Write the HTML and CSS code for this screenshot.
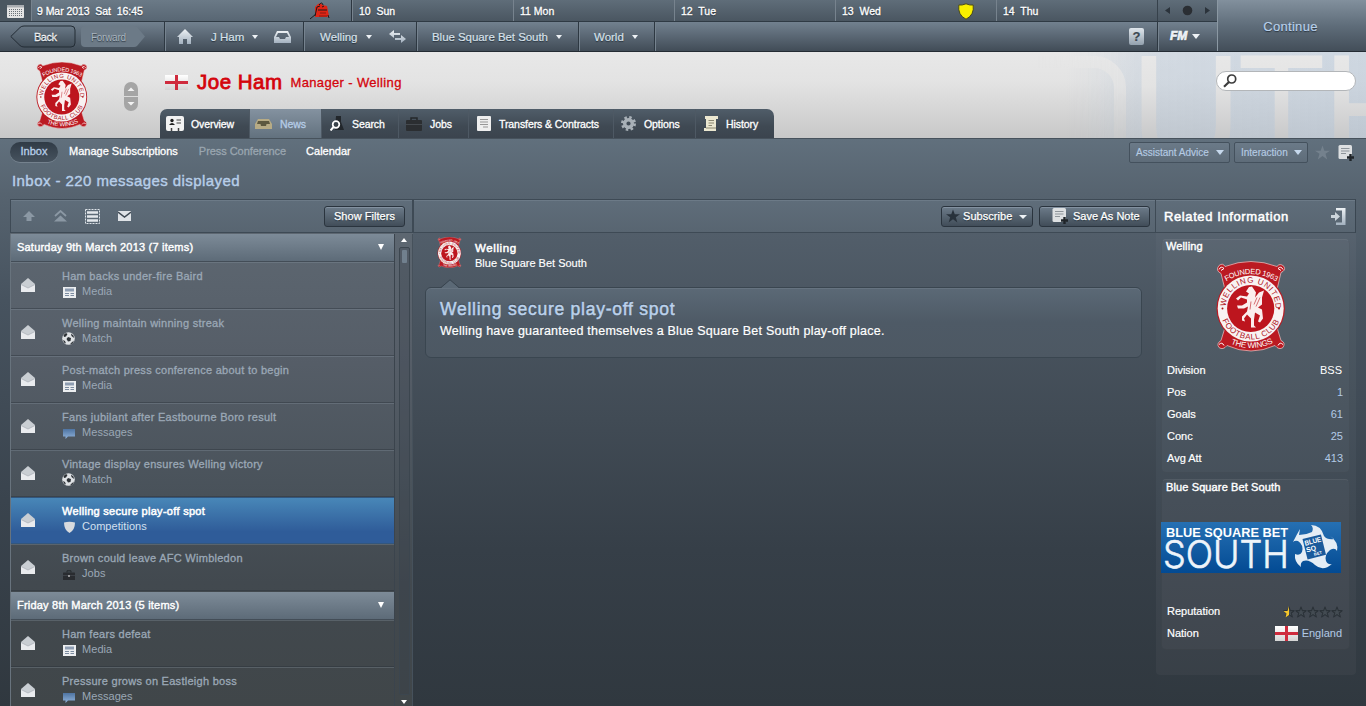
FILE: index.html
```html
<!DOCTYPE html>
<html lang="en">
<head>
    <meta charset="UTF-8">
    <meta name="viewport" content="width=device-width, initial-scale=1.0">
    <title>Joe Ham - Inbox</title>
    <link rel="stylesheet" href="styles.css">
</head>
<body>
    <!-- shared icons -->
    <svg class="defs" width="0" height="0">
        <defs>
            <linearGradient id="metal" x1="0" y1="0" x2="0" y2="1">
                <stop offset="0" stop-color="#eef2f5"/><stop offset="1" stop-color="#a3b1bf"/>
            </linearGradient>
            <linearGradient id="flag-shade" x1="0" y1="0" x2="0" y2="1">
                <stop offset="0" stop-color="#fff"/><stop offset="1" stop-color="#d4d4d4"/>
            </linearGradient>
            <linearGradient id="blue" x1="0" y1="0" x2="0" y2="1">
                <stop offset="0" stop-color="#2670b3"/><stop offset="1" stop-color="#024a93"/>
            </linearGradient>
            <linearGradient id="chat" x1="0" y1="0" x2="0" y2="1">
                <stop offset="0" stop-color="#4e74a2"/><stop offset="1" stop-color="#92b4dc"/>
            </linearGradient>
            <linearGradient id="back-fill" x1="0" y1="0" x2="0" y2="1">
                <stop offset="0" stop-color="#6b7a88"/><stop offset="1" stop-color="#414d58"/>
            </linearGradient>
            <linearGradient id="letters" gradientUnits="userSpaceOnUse" x1="0" y1="52" x2="0" y2="138">
                <stop offset="0" stop-color="#e8e8e8"/><stop offset=".4" stop-color="#e3e3e3"/><stop offset="1" stop-color="#c8c9ca"/>
            </linearGradient>
            <linearGradient id="tint" x1="0" y1="0" x2="1" y2="0">
                <stop offset="0" stop-color="#b4c6da" stop-opacity="0"/><stop offset=".3" stop-color="#b4c6da" stop-opacity=".4"/><stop offset="1" stop-color="#b4c6da" stop-opacity=".5"/>
            </linearGradient>
            <path id="arc-founded" d="M8 21Q35 4 62 21"/>
            <path id="arc-name" d="M10.300 52A25 25 0 1 1 59 52"/>
            <path id="arc-club" d="M4 47A31 31 0 0 0 66 47"/>
            <path id="arc-wings" d="M10 80Q35 93 60 80"/>
        </defs>
        <symbol id="crest" viewBox="0 0 70 90">
            <path d="M3 4Q7 1 9 5Q35-5 61 5Q64 1 68 5Q70 9 65 11L61 28H9L5 12Q-1 9 3 4Z" fill="#bb1a22" stroke="#ecc9c9" stroke-width=".7"/>
            <path d="M9 66H61L65 79Q70 81 67 86Q63 89 59 84Q35 95 11 84Q7 89 3 86Q0 82 5 79Z" fill="#bb1a22" stroke="#ecc9c9" stroke-width=".7"/>
            <path d="M3 8Q5 4 8 7L5 9M67 8Q65 4 62 7L65 9M3 83Q6 80 8 84M67 83Q64 80 62 84" fill="none" stroke="#fff" stroke-width="1"/>
            <circle cx="34.700" cy="47" r="34.200" fill="#bb1a22"/>
            <circle cx="34.700" cy="47" r="33" fill="#f8f2f2"/>
            <circle cx="34.700" cy="47" r="23.600" fill="#bd151e"/>
            <circle cx="6.500" cy="47" r="1" fill="#a11"/>
            <circle cx="63" cy="47" r="1" fill="#a11"/>
            <path d="M30 30L33 25.500L36 25L40 31L39 36L43 31L48 29L46 36L46 43L42 46L46 48L47 57L44 61L42 60L44 54L39 51L38 58L38 64L40 66H35L35 57L31 53L28 57L29 60L26 59L26 55L31 50L32 45L28 47L22 47L21 44L26 44L31 41L31 38L25 36L22 39L20 37L24 34L31 35L33 32Z" fill="#fbeeee"/>
            <path d="M41 36L38 43M44 36L40 45M35 40L34 48" stroke="#bd151e" stroke-width=".6"/>
            <g font-family="Liberation Sans, sans-serif" font-size="8">
                <text fill="#fff" font-size="7.500"><textPath href="#arc-founded" startOffset="2.500" textLength="53">FOUNDED 1963</textPath></text>
                <text fill="#b0151e"><textPath href="#arc-name" startOffset="7" textLength="78">WELLING UNITED</textPath></text>
                <text fill="#b0151e"><textPath href="#arc-club" startOffset="12" textLength="72">FOOTBALL CLUB</textPath></text>
                <text fill="#fff"><textPath href="#arc-wings" startOffset="5" textLength="44">THE WINGS</textPath></text>
            </g>
        </symbol>
        <symbol id="england" viewBox="0 0 23 15">
            <rect width="23" height="15" fill="url(#flag-shade)"/>
            <path d="M0 7.500H23M11.500 0V15" stroke="#cf2b3d" stroke-width="3"/>
        </symbol>
        <symbol id="mail-open" viewBox="0 0 14 14">
            <path d="M0 6L7 0L14 6V13.500H0Z" fill="#c9ced3"/>
            <path d="M0 6.500L7 10L14 6.500V14H0Z" fill="#e9ebee"/>
            <path d="M0 6.500L7 10L14 6.500" fill="none" stroke="#a9afb6" stroke-width=".7"/>
        </symbol>
        <symbol id="media" viewBox="0 0 13 11">
            <rect width="13" height="11" fill="#eceef0"/>
            <rect x="2" y="1.500" width="9" height="3" fill="#8e9db2"/>
            <path d="M2 6.500H6M7.500 6.500H11M2 8.500H6M7.500 8.500H11" stroke="#7b8ba0"/>
        </symbol>
        <symbol id="match" viewBox="0 0 13 13">
            <circle cx="6.500" cy="6.500" r="6.300" fill="#dfe2e5"/>
            <path d="M1.500 3L4 1L5.500 2L4 4.500L2 5ZM6 5L9 6L8.500 9L6 9.500L4.500 7ZM9 1.500L11.500 3.500L12 6L9.500 4ZM1 8L3 9L4 11.500L2 10.500ZM9 11L12 8.500L10.500 11.500L8 12.500Z" fill="#2c3136"/>
        </symbol>
        <symbol id="messages" viewBox="0 0 12 10">
            <path d="M0 0H12V7.500H5L2.500 10V7.500H0Z" fill="url(#chat)"/>
        </symbol>
        <symbol id="competitions" viewBox="0 0 11 12">
            <path d="M0 1.500Q5.500 0 11 1.500Q11 9 5.500 12Q0 9 0 1.500Z" fill="#d8dbde"/>
        </symbol>
        <symbol id="briefcase" viewBox="0 0 12 10">
            <path d="M4 2.500V.8H8V2.500" fill="none" stroke="#24282c"/>
            <rect y="2.500" width="12" height="7.500" rx=".6" fill="#292c30"/>
            <path d="M0 5.500H12" stroke="#4b5158" stroke-width=".6"/>
            <rect x="5.400" y="5" width="1.200" height="2" fill="#d6d6d6"/>
        </symbol>
        <symbol id="note-add" viewBox="0 0 16 16">
            <rect x=".5" width="13.500" height="14" rx="1.500" fill="#dde0e2"/>
            <path d="M3 3.500H11.500M3 6H11.500M3 8.500H8" stroke="#8d949a"/>
            <path d="M12.500 9V16M9 12.500H16" stroke="#1f2429" stroke-width="2.400"/>
        </symbol>
        <symbol id="star" viewBox="0 0 16 16">
            <path d="M8 .5L10 6H16L11.200 9.400L13 15.500L8 11.800L3 15.500L4.800 9.400L0 6H6Z"/>
        </symbol>
    </svg>

    <header class="top">
        <div class="top-left">
            <div class="days">
                <div class="cal">
                    <svg width="17" height="13" viewBox="0 0 17 13">
                        <rect width="17" height="13" rx="1" fill="#e4e4e4"/>
                        <rect width="17" height="2.500" fill="#a9adb1"/>
                        <path d="M2 4.500H15M2 6.500H15M2 8.500H15M2 10.500H15" stroke="#6a7178" stroke-dasharray="1 1"/>
                    </svg>
                </div>
                <div class="day today">
                    <span>9 Mar 2013&nbsp; Sat&nbsp; 16:45</span>
                    <svg class="dragon" width="20" height="18" viewBox="0 0 20 18">
                        <path d="M5 5L8 2L11 1L12 3L17 4L19 14L17 15H5Z" fill="#df2415"/>
                        <path d="M0 17L6 12M5 14L7 5L10 4M9 3Q12-1 13 3M8 8H17M18 13L19 16M12 5L14 4" fill="none" stroke="#1b1a1c" stroke-width="1"/>
                        <path d="M9 14H17M10 11H16" stroke="#881812"/>
                    </svg>
                </div>
                <div class="day">10&nbsp; Sun</div>
                <div class="day">11 Mon</div>
                <div class="day">12&nbsp; Tue</div>
                <div class="day">
                    13&nbsp; Wed
                    <svg class="shield" width="16" height="17" viewBox="0 0 16 17">
                        <path d="M.8 2Q4 2.500 8 .8Q12 2.500 15.200 2Q16.500 12 8 16.200Q-.5 12 .8 2Z" fill="#f9f000" stroke="#4a4a1c"/>
                    </svg>
                </div>
                <div class="day">14&nbsp; Thu</div>
                <div class="pager">
                    <svg width="48" height="12" viewBox="0 0 48 12">
                        <path d="M6 2V9L1 5.500ZM41 2V9L46 5.500Z" fill="#2b333b"/>
                        <circle cx="23.500" cy="5.500" r="4.800" fill="#2a2e33"/>
                    </svg>
                </div>
            </div>
            <nav class="crumbs">
                <div class="history">
                    <svg width="66" height="23" viewBox="0 0 66 23">
                        <path d="M.8 11.500L10 2.500Q11.500 1 14 1H61Q65 1 65 5V18Q65 22 61 22H14Q11.500 22 10 20.500Z" fill="url(#back-fill)" stroke="#232c35"/>
                        <text x="24" y="16" class="back-text" textLength="23">Back</text>
                    </svg>
                    <svg width="64" height="21" viewBox="0 0 64 21">
                        <path d="M4 0H53Q55 0 56 1L64 10.500L56 20Q55 21 53 21H4Q0 21 0 17V4Q0 0 4 0Z" fill="#6c7a87"/>
                        <text x="10" y="14.500" class="forward-text" textLength="35">Forward</text>
                    </svg>
                </div>
                <div class="crumb user">
                    <svg width="16" height="15" viewBox="0 0 16 15"><path d="M8 0L16 8H14V15H10V10H6V15H2V8H0Z" fill="url(#metal)"/></svg>
                    <span>J Ham</span><i class="caret"></i>
                    <svg width="17" height="12" viewBox="0 0 17 12"><path d="M3 0H14L17 6V12H0V6ZM4 2L2 6H5L6 8H11L12 6H15L13 2Z" fill="url(#metal)" fill-rule="evenodd"/></svg>
                </div>
                <div class="crumb club">
                    <span>Welling</span><i class="caret"></i>
                    <svg width="17" height="13" viewBox="0 0 17 13"><path d="M5 0V3H11V5H5V8L0 4ZM12 5V8H6V10H12V13L17 9Z" fill="url(#metal)"/></svg>
                </div>
                <div class="crumb comp"><span>Blue Square Bet South</span><i class="caret"></i></div>
                <div class="crumb world"><span>World</span><i class="caret"></i></div>
                <div class="crumb rest"><b class="help">?</b></div>
                <div class="crumb fm"><span>FM</span><i class="caret"></i></div>
            </nav>
        </div>
        <div class="continue">Continue</div>
    </header>

    <section class="title-bar">
        <svg class="watermark" width="330" height="86" viewBox="1036 52 330 86">
            <rect x="1066" y="52" width="300" height="86" fill="url(#tint)"/>
            <rect x="960" y="62" width="160" height="140" rx="26" fill="none" stroke="url(#letters)" stroke-width="12" opacity=".85"/>
            <g font-family="Liberation Sans, sans-serif" font-size="163" fill="url(#letters)">
                <text x="1129.500" y="168" textLength="113" lengthAdjust="spacingAndGlyphs">U</text>
                <text x="1237.500" y="168" textLength="88" lengthAdjust="spacingAndGlyphs">T</text>
                <text x="1321.500" y="168" textLength="113" lengthAdjust="spacingAndGlyphs">H</text>
            </g>
        </svg>
        <svg class="crest-main" width="52" height="67"><use href="#crest"/></svg>
        <svg class="stepper" width="14" height="29" viewBox="0 0 14 29">
            <path d="M0 14V7A7 7 0 0 1 14 7V14ZM0 15H14V22A7 7 0 0 1 0 22Z" fill="#a5a5a5"/>
            <path d="M3.500 9H10.500L7 5.500ZM3.500 20H10.500L7 23.500Z" fill="#f2f2f2"/>
        </svg>
        <div class="title-main">
            <div class="who">
                <svg width="23" height="15"><use href="#england"/></svg>
                <h1>Joe Ham</h1>
                <span>Manager - Welling</span>
            </div>
            <ul class="tabs">
                <li class="t1"><svg width="18" height="15" viewBox="0 0 18 15"><rect width="18" height="15" rx="2" fill="#f2f2f2"/><circle cx="6" cy="4.500" r="1.700" fill="#222"/><path d="M3 9Q6 5 9 9Z" fill="#222"/><path d="M10.500 4H15M10.500 7H15" stroke="#444"/><path d="M5.500 12V15M12.500 12V15" stroke="#444" stroke-width="1.500"/></svg>Overview</li>
                <li class="t2 on"><svg width="17" height="10" viewBox="0 0 17 10"><path d="M3 0H14L17 5V10H0V5Z" fill="#b7ab85"/><path d="M3 2H14L15 5H11.500L11 7H6L5.500 5H2Z" fill="#5d583f"/></svg>News</li>
                <li class="t3"><svg width="14" height="15" viewBox="0 0 14 15"><path d="M6 0H11V6L14 14H5Z" fill="#22272c"/><circle cx="6" cy="8.500" r="3.300" fill="#39424a" stroke="#fff" stroke-width="1.700"/><path d="M3.500 11L.5 14.500" stroke="#fff" stroke-width="2"/></svg>Search</li>
                <li class="t4"><svg width="16" height="14" viewBox="0 0 16 14"><path d="M5 3V1H11V3" fill="none" stroke="#25282b" stroke-width="1.500"/><rect y="3" width="16" height="11" rx="1" fill="#2b2e31"/><path d="M0 7.500H16" stroke="#44494e"/></svg>Jobs</li>
                <li class="t5"><svg width="14" height="15" viewBox="0 0 14 15"><rect width="14" height="15" rx="1" fill="#eee"/><path d="M3 3.500H11M3 6H11M3 8.500H11M6 11H11" stroke="#979797"/></svg>Transfers &amp; Contracts</li>
                <li class="t6"><svg width="15" height="15" viewBox="0 0 15 15"><circle cx="7.500" cy="7.500" r="6" fill="none" stroke="#a8b0b7" stroke-width="3" stroke-dasharray="2.400 2.312"/><circle cx="7.500" cy="7.500" r="3.800" fill="none" stroke="#a8b0b7" stroke-width="3.400"/></svg>Options</li>
                <li class="t7"><svg width="14" height="15" viewBox="0 0 14 15"><path d="M1 0H14V3H12V15H0V12H2V3H1Z" fill="#ebe7d0"/><path d="M4.500 4.500H10M4.500 7H10M4.500 9.500H8M2 12H12" stroke="#8a8671"/></svg>History</li>
            </ul>
        </div>
        <div class="search">
            <svg width="14" height="14" viewBox="0 0 14 14"><circle cx="8.700" cy="5" r="4" fill="none" stroke="#3c3c3c" stroke-width="1.700"/><path d="M6 8L1 12.800" stroke="#3c3c3c" stroke-width="2.200"/></svg>
        </div>
    </section>

    <nav class="sub-nav">
        <ul>
            <li class="pill">Inbox</li>
            <li>Manage Subscriptions</li>
            <li class="off">Press Conference</li>
            <li>Calendar</li>
        </ul>
        <div class="actions">
            <span class="drop advice">Assistant Advice<i class="caret"></i></span>
            <span class="drop interaction">Interaction<i class="caret"></i></span>
            <svg class="fav" width="15" height="15"><use href="#star"/></svg>
            <svg width="16" height="16"><use href="#note-add"/></svg>
        </div>
    </nav>
    <h2 class="count">Inbox - 220 messages displayed</h2>

    <main>
        <section class="inbox">
            <div class="tools">
                <svg width="12" height="10" viewBox="0 0 12 10"><path d="M6 0L12 6H8.500V10H3.500V6H0Z" fill="#8b98a4"/></svg>
                <svg width="13" height="12" viewBox="0 0 13 12"><path d="M1 6L6.500 1L12 6" fill="none" stroke="#8b98a4" stroke-width="1.800"/><path d="M6.500 5.500L13 11.500H0Z" fill="#8b98a4"/></svg>
                <svg width="15" height="15" viewBox="0 0 15 15"><rect x=".5" y=".5" width="14" height="14" fill="none" stroke="#dfe5ea" stroke-dasharray="2 1"/><path d="M2 3.500H13M2 7.500H13M2 11.500H13" stroke="#e4e8ec" stroke-width="2.500"/></svg>
                <svg width="13" height="10" viewBox="0 0 13 10"><rect width="13" height="10" fill="#dfe3e7"/><path d="M0 1L6.500 6L13 1" fill="none" stroke="#3e4953" stroke-width="1.400"/></svg>
                <span class="btn filters">Show Filters</span>
            </div>
            <div class="list-wrap">
                <div class="list">
                    <div class="group">Saturday 9th March 2013 (7 items)<i></i></div>
                    <div class="item"><svg class="env"><use href="#mail-open"/></svg><div><h3>Ham backs under-fire Baird</h3><p><svg class="kind media"><use href="#media"/></svg>Media</p></div></div>
                    <div class="item"><svg class="env"><use href="#mail-open"/></svg><div><h3>Welling maintain winning streak</h3><p><svg class="kind"><use href="#match"/></svg>Match</p></div></div>
                    <div class="item"><svg class="env"><use href="#mail-open"/></svg><div><h3>Post-match press conference about to begin</h3><p><svg class="kind media"><use href="#media"/></svg>Media</p></div></div>
                    <div class="item"><svg class="env"><use href="#mail-open"/></svg><div><h3>Fans jubilant after Eastbourne Boro result</h3><p><svg class="kind small"><use href="#messages"/></svg>Messages</p></div></div>
                    <div class="item"><svg class="env"><use href="#mail-open"/></svg><div><h3>Vintage display ensures Welling victory</h3><p><svg class="kind"><use href="#match"/></svg>Match</p></div></div>
                    <div class="item selected"><svg class="env"><use href="#mail-open"/></svg><div><h3>Welling secure play-off spot</h3><p><svg class="kind shield-icon"><use href="#competitions"/></svg>Competitions</p></div></div>
                    <div class="item"><svg class="env"><use href="#mail-open"/></svg><div><h3>Brown could leave AFC Wimbledon</h3><p><svg class="kind small"><use href="#briefcase"/></svg>Jobs</p></div></div>
                    <div class="group second">Friday 8th March 2013 (5 items)<i></i></div>
                    <div class="item"><svg class="env"><use href="#mail-open"/></svg><div><h3>Ham fears defeat</h3><p><svg class="kind media"><use href="#media"/></svg>Media</p></div></div>
                    <div class="item"><svg class="env"><use href="#mail-open"/></svg><div><h3>Pressure grows on Eastleigh boss</h3><p><svg class="kind small"><use href="#messages"/></svg>Messages</p></div></div>
                </div>
                <div class="scroll">
                    <i class="up"></i>
                    <div class="track"><div class="thumb"></div></div>
                    <i class="down"></i>
                </div>
            </div>
        </section>

        <section class="message">
            <div class="tools">
                <span class="btn subscribe"><svg width="14" height="14"><use href="#star"/></svg>Subscribe<i class="caret"></i></span>
                <span class="btn save"><svg width="16" height="16"><use href="#note-add"/></svg>Save As Note</span>
            </div>
            <div class="from">
                <svg width="25" height="31"><use href="#crest"/></svg>
                <div>
                    <b>Welling</b>
                    <span>Blue Square Bet South</span>
                </div>
            </div>
            <article class="bubble">
                <svg class="tip" width="18" height="9" viewBox="0 0 18 9"><path d="M0 9L9 .8L18 9Z" fill="#5b6976"/><path d="M0 8.500L9 .8L18 8.500" fill="none" stroke="#38444e"/></svg>
                <h2>Welling secure play-off spot</h2>
                <p>Welling have guaranteed themselves a Blue Square Bet South play-off place.</p>
            </article>
        </section>

        <aside class="related">
            <div class="tools">
                <h2>Related Information</h2>
                <svg width="15" height="17" viewBox="0 0 15 17"><path d="M5 0H14.500V17H5V14.500H11V2.500H5Z" fill="url(#metal)"/><path d="M0 7H4V4L9 8.500L4 13V10H0Z" fill="#cdd5dc"/></svg>
            </div>
            <div class="card club-card">
                <h3>Welling</h3>
                <svg class="crest-big" width="70" height="91"><use href="#crest"/></svg>
                <dl>
                    <dt>Division</dt><dd class="white">BSS</dd>
                    <dt>Pos</dt><dd>1</dd>
                    <dt>Goals</dt><dd>61</dd>
                    <dt>Conc</dt><dd>25</dd>
                    <dt>Avg Att</dt><dd>413</dd>
                </dl>
            </div>
            <div class="card comp-card">
                <h3>Blue Square Bet South</h3>
                <svg class="banner" width="180" height="51" viewBox="0 0 180 51">
                    <rect width="180" height="51" fill="url(#blue)"/>
                    <text x="5" y="15" class="banner-top" textLength="122" lengthAdjust="spacingAndGlyphs">BLUE SQUARE BET</text>
                    <text x="2" y="46" class="banner-main" textLength="126" lengthAdjust="spacingAndGlyphs">SOUTH</text>
                    <path d="M132 20Q136 12 139 7L138 13Q145 13 151 10Q153 6 150 3Q160 3 163 14Q166 18 173 17L169 14Q178 20 176 29Q174 25 169 28Q163 33 165 39Q167 43 171 42Q162 50 154 43Q148 37 142 39Q139 41 140 45Q133 40 134 32Q139 34 141 30Q143 23 137 19Q134 18 132 20Z" fill="#e4edf5"/>
                    <g class="banner-logo" transform="rotate(-14 153 24)">
                        <rect x="143.500" y="14.500" width="19" height="21" fill="#1a5a9b"/>
                        <text x="144.500" y="21.500" textLength="17" lengthAdjust="spacingAndGlyphs">BLUE</text>
                        <text x="144.500" y="28.500">SQ</text>
                        <text x="151" y="33.500" class="tiny">BET</text>
                    </g>
                </svg>
                <dl>
                    <dt>Reputation</dt>
                    <dd class="stars">
                        <svg width="60" height="12" viewBox="0 0 60 12">
                            <g fill="#434b52" stroke="#2b3238" stroke-width="1.500">
                                <use href="#star" x=".5" y=".5" width="11" height="11"/>
                                <use href="#star" x="12.500" y=".5" width="11" height="11"/>
                                <use href="#star" x="24.500" y=".5" width="11" height="11"/>
                                <use href="#star" x="36.500" y=".5" width="11" height="11"/>
                                <use href="#star" x="48.500" y=".5" width="11" height="11"/>
                            </g>
                            <path d="M6 0V9L2.500 11.500L3.500 7.500L.5 5H4.500Z" fill="#f5c62c"/>
                        </svg>
                    </dd>
                    <dt>Nation</dt>
                    <dd class="nation"><svg width="23" height="15"><use href="#england"/></svg>England</dd>
                </dl>
            </div>
        </aside>
    </main>
</body>
</html>
```

FILE: styles.css
```css
* {
    box-sizing: border-box;
}
body {
    margin: 0;
    height: 706px;
    overflow: hidden;
    font-family: "Liberation Sans", Arial, sans-serif;
    font-size: 11px;
    color: #fff;
    background: linear-gradient(#61707d 138px, #56636f 195px, #47535f 300px, #3a444e 500px, #30383f 706px);
}
h1, h2, h3, p, ul, dl, dd {
    margin: 0;
    padding: 0;
    font-weight: normal;
}
ul {
    list-style: none;
}
svg {
    display: block;
    flex: none;
}
.defs {
    position: absolute;
}
.caret {
    width: 0;
    height: 0;
    border: 3.5px solid transparent;
    border-top: 4px solid #eef2f6;
    border-bottom: 0;
}

/* top bar */
.top {
    display: grid;
    grid-template-columns: 1217px 149px;
    height: 52px;
    border-bottom: 1px solid #242c34;
    text-shadow: 0 1px 1px rgba(20, 30, 40, 0.7);
}
.days {
    display: flex;
    height: 22px;
    background: linear-gradient(#5f6d79, #4a5661);
    border-bottom: 1px solid #2f3a44;
}
.cal {
    width: 31px;
    padding: 5px 0 0 7px;
    background: #4a5660;
}
.day {
    position: relative;
    width: 161px;
    padding: 5px 0 0 6px;
    line-height: 13px;
    border-left: 1px solid #77838e;
    font-size: 10.5px;
    -webkit-text-stroke: 0.3px #fff;
}
.day.today {
    width: 321px;
    padding-left: 5px;
    background: linear-gradient(#6b7a87, #586673);
    letter-spacing: -0.05px;
    border-right: 1px solid #2c3640;
}
.dragon {
    position: absolute;
    right: 21px;
    top: 2px;
}
.shield {
    position: absolute;
    right: 22px;
    top: 3px;
}
.pager {
    flex: 1;
    padding: 5px 0 0 6px;
    border-left: 1px solid #36414b;
}
.crumbs {
    display: flex;
    height: 29px;
    background: linear-gradient(#72818f, #5c6976 45%, #414c57);
    font-size: 11.5px;
    color: #d7e1ea;
}
.history {
    display: flex;
    align-items: center;
    gap: 5px;
    width: 164px;
    padding-left: 10px;
}
.back-text {
    font-size: 11px;
    fill: #fff;
    stroke: #fff;
    stroke-width: 0.3px;
}
.forward-text {
    font-size: 10px;
    fill: #aab5bf;
}
.crumb {
    display: flex;
    align-items: center;
    border-left: 1px solid #2d3842;
    box-shadow: inset 1px 0 0 #76838f;
    -webkit-text-stroke: 0.2px;
}
.crumb span {
    margin-right: 8px;
}
.user {
    width: 139px;
    padding-left: 12px;
}
.user span {
    margin-left: 18px;
}
.user svg:last-child {
    margin-left: 16px;
}
.club {
    width: 113px;
    padding-left: 16px;
}
.club svg {
    margin-left: 17px;
}
.comp {
    width: 162px;
    padding-left: 15px;
    letter-spacing: -0.05px;
}
.world {
    width: 76px;
    padding-left: 15px;
}
.rest {
    flex: 1;
    justify-content: flex-end;
    padding-right: 13px;
}
.help {
    width: 15px;
    height: 17px;
    line-height: 17px;
    text-align: center;
    font-size: 13px;
    color: #3d4852;
    background: linear-gradient(#e0e6ec, #92a0ad);
    border-radius: 2px;
    text-shadow: none;
}
.fm {
    width: 60px;
    padding: 0 0 1px 12px;
}
.fm span {
    font-size: 12px;
    font-style: italic;
    font-weight: bold;
    color: #eef2f6;
    margin-right: 5px;
    -webkit-text-stroke: 0.7px;
}
.fm .caret {
    border-width: 5px 4px 0;
}
.continue {
    display: flex;
    align-items: center;
    justify-content: center;
    font-size: 13px;
    letter-spacing: 0.3px;
    color: #b9d0ea;
    -webkit-text-stroke: 0.2px;
    background: linear-gradient(#82909d, #5f6d7a 50%, #434e59);
    border-left: 1px solid #8b98a3;
    padding: 2px 3px 0 0;
}

/* title bar */
.title-bar {
    position: relative;
    display: flex;
    height: 86px;
    background: linear-gradient(#e8e8e8, #e3e3e3 35%, #c8c8c8);
}
.watermark {
    position: absolute;
    right: 0;
    top: 0;
    -webkit-mask-image: linear-gradient(to right, transparent, #000 25%);
    mask-image: linear-gradient(to right, transparent, #000 25%);
}
.crest-main {
    margin: 10px 0 0 36px;
}
.stepper {
    margin: 30px 0 0 36px;
}
.title-main {
    margin-left: 22px;
}
.who {
    display: flex;
    align-items: center;
    height: 57px;
    padding: 3px 0 0 5px;
    color: #d4040c;
}
.who h1 {
    margin: 0 8px 0 9px;
    font-size: 20.5px;
    letter-spacing: 0.5px;
    -webkit-text-stroke: 0.8px;
}
.who span {
    font-size: 13px;
    letter-spacing: 0.35px;
    padding-top: 1px;
    -webkit-text-stroke: 0.3px;
}
.tabs {
    display: flex;
    height: 29px;
    border-radius: 7px 7px 0 0;
    overflow: hidden;
    background: linear-gradient(#505d69, #3f4953 60%, #3b444e);
}
.tabs li {
    display: flex;
    align-items: center;
    border-left: 1px solid #4e5964;
    padding-left: 6px;
    font-size: 10.5px;
    letter-spacing: -0.08px;
    -webkit-text-stroke: 0.3px;
}
.tabs li svg {
    margin-right: 7px;
}
.tabs .t1 { width: 89px; border-left: 0; }
.tabs .t2 { width: 72px; padding-left: 5px; }
.tabs .t3 { width: 77px; padding-left: 8px; }
.tabs .t4 { width: 70px; padding-left: 7px; }
.tabs .t5 { width: 145px; padding-left: 8px; }
.tabs .t6 { width: 82px; padding-left: 7px; }
.tabs .t7 { width: 79px; padding-left: 8px; }
.tabs .t2 svg, .tabs .t3 svg, .tabs .t4 svg, .tabs .t5 svg, .tabs .t6 svg, .tabs .t7 svg {
    margin-right: 8px;
}
.tabs .on {
    background: linear-gradient(#8492a0, #62717e);
    color: #b5cce6;
}
.search {
    position: absolute;
    left: 1216px;
    top: 19px;
    width: 140px;
    height: 20px;
    padding: 2px 0 0 6px;
    background: #fff;
    border: 1px solid #b3b6b9;
    border-radius: 10px;
}

/* sub navigation */
.sub-nav {
    display: flex;
    justify-content: space-between;
    height: 31px;
    border-top: 1px solid #47525c;
    padding: 3px 12px 0 10px;
}
.sub-nav ul {
    display: flex;
    line-height: 19px;
    -webkit-text-stroke: 0.3px;
}
.sub-nav li {
    margin-right: 21px;
}
.sub-nav .pill {
    width: 48px;
    height: 20px;
    margin-right: 11px;
    text-align: center;
    border-radius: 10px;
    color: #b9d0ea;
    background: linear-gradient(#303b46, #46525e);
    box-shadow: 0 1px 0 #75828e;
}
.sub-nav .off {
    margin-right: 20px;
    color: #9aa6b0;
    letter-spacing: -0.05px;
}
.actions {
    display: flex;
}
.drop {
    display: flex;
    align-items: center;
    justify-content: space-between;
    height: 21px;
    padding: 0 5px 0 6px;
    font-size: 10px;
    color: #b5cbe3;
    white-space: nowrap;
    background: linear-gradient(#6b7a88, #5e6c79);
    border: 1px solid #44515d;
    border-radius: 2px;
    -webkit-text-stroke: 0.15px;
}
.advice {
    width: 101px;
    margin-right: 4px;
}
.interaction {
    width: 74px;
}
.drop .caret {
    border-width: 5px 4px 0;
    border-top-color: #c6d8ec;
}
.fav {
    margin: 3px 8px 0 7px;
    fill: #74818d;
}
.fav + svg {
    margin-top: 3px;
}
.count {
    height: 30px;
    padding: 3px 0 0 12px;
    font-size: 15px;
    letter-spacing: 0.43px;
    line-height: 18px;
    color: #b7cee9;
    -webkit-text-stroke: 0.4px;
}

/* panels */
main {
    display: flex;
    height: 507px;
    padding-left: 10px;
}
.tools {
    display: flex;
    align-items: center;
    height: 34px;
    background: linear-gradient(#5f6d7a, #586571);
    border: 1px solid #3e4a55;
    box-shadow: inset 0 1px 0 #6c7a87;
}
.btn {
    display: flex;
    align-items: center;
    height: 21px;
    border: 1px solid #2a343e;
    border-radius: 3px;
    background: linear-gradient(#6c7b89, #414d59);
    box-shadow: inset 0 1px 0 #8391a0;
    text-shadow: 0 1px 1px rgba(20, 30, 40, 0.7);
    -webkit-text-stroke: 0.25px;
}
.inbox {
    width: 403px;
}
.inbox .tools {
    padding-left: 12px;
}
.inbox .tools svg {
    margin-right: 18px;
}
.inbox .tools svg:first-child {
    margin-right: 19px;
}
.filters {
    width: 81px;
    margin-left: auto;
    margin-right: 7px;
    justify-content: center;
    letter-spacing: 0.05px;
}
.list-wrap {
    display: flex;
    height: 473px;
    padding-top: 1px;
    background: linear-gradient(#5d6771, #565e68 120px, #49525a 260px, #42494f 350px, #404649);
}
.list {
    width: 384px;
    border-left: 1px solid #68737d;
}
.group {
    display: flex;
    align-items: center;
    justify-content: space-between;
    height: 28px;
    padding: 0 10px 1px 6px;
    background: linear-gradient(#7d8b98, #5d6b78);
    border-bottom: 1px solid #434d57;
    letter-spacing: 0.21px;
    -webkit-text-stroke: 0.4px;
}
.group.second {
    margin-top: 1px;
}
.group i {
    border: 3.5px solid transparent;
    border-top: 6px solid #fff;
    border-bottom: 0;
}
.item {
    display: flex;
    height: 47px;
    border-top: 1px solid rgba(140, 153, 165, 0.3);
    border-bottom: 1px solid rgba(40, 48, 56, 0.4);
    color: #9ba8b6;
}
.env {
    width: 14px;
    height: 14px;
    margin: 15px 27px 0 10px;
}
.item h3 {
    padding-top: 7px;
    font-size: 11px;
    line-height: 13px;
    letter-spacing: 0.27px;
    -webkit-text-stroke: 0.3px;
}
.item p {
    display: flex;
    align-items: center;
    height: 14px;
    margin-top: 1px;
    line-height: 14px;
    letter-spacing: 0.05px;
}
.kind {
    width: 13px;
    height: 13px;
    margin: 1px 7px 0 0;
}
.kind.media {
    height: 11px;
    margin: 3px 6px 0 1px;
}
.kind.small {
    width: 12px;
    height: 10px;
    margin: 4px 7px 0 1px;
}
.kind.shield-icon {
    width: 11px;
    height: 12px;
    margin: 2px 7px 0 2px;
}
.item.selected {
    background: linear-gradient(#4887b8, #2f5c99 75%);
    border-color: #33567d;
    color: #d3e0ef;
}
.item.selected h3 {
    color: #fff;
    letter-spacing: 0.3px;
    -webkit-text-stroke: 0.5px;
}
.scroll {
    display: flex;
    flex-direction: column;
    align-items: center;
    width: 19px;
    padding: 4px 0 2px 1px;
    border-left: 1px solid #3b444d;
    border-right: 1px solid #46515b;
}
.scroll i {
    border: 3.5px solid transparent;
    border-bottom: 4px solid #fff;
    border-top: 0;
}
.scroll .down {
    border-bottom: 0;
    border-top: 4px solid #fff;
}
.track {
    flex: 1;
    width: 11px;
    margin: 5px 0;
    padding: 2px;
    border: 1px solid #3c464f;
    border-radius: 2px;
    background: rgba(50, 60, 70, 0.25);
}
.thumb {
    width: 5px;
    height: 13px;
    background: #71808e;
    border-radius: 1px;
}
.message {
    width: 743px;
    background: linear-gradient(#525e6a 34px, #48535e 130px, #414b55 220px, #363f48 350px, #30383f);
}
.message .tools {
    justify-content: flex-end;
    padding-right: 5px;
}
.subscribe {
    width: 92px;
    padding-left: 4px;
    margin-right: 6px;
    letter-spacing: 0.05px;
}
.subscribe svg {
    margin-right: 3px;
    fill: #28323c;
}
.subscribe .caret {
    margin: 2px 0 0 7px;
    border-width: 4px 4px 0;
}
.save {
    width: 111px;
    padding-left: 12px;
}
.save svg {
    margin-right: 5px;
}
.from {
    display: flex;
    gap: 13px;
    padding: 4px 0 0 24px;
}
.from div {
    display: flex;
    flex-direction: column;
    padding-top: 4px;
    line-height: 15px;
}
.from b {
    font-weight: normal;
    font-size: 11.5px;
    letter-spacing: 0.6px;
    -webkit-text-stroke: 0.5px;
}
.from span {
    -webkit-text-stroke: 0.15px;
}
.bubble {
    position: relative;
    width: 717px;
    height: 71px;
    margin: 16px 0 0 12px;
    padding: 12px 14px;
    border: 1px solid #3a4650;
    border-radius: 6px;
    background: linear-gradient(#5b6976, #4e5a66 50%, #4d5863);
    box-shadow: inset 0 1px 0 #667380;
}
.tip {
    position: absolute;
    left: 15px;
    top: -9px;
}
.bubble h2 {
    font-size: 17.5px;
    line-height: 18px;
    color: #bcd2ec;
    letter-spacing: 0.75px;
    -webkit-text-stroke: 0.5px;
    text-shadow: 0 -1px 1px #34404a;
}
.bubble p {
    margin-top: 6px;
    font-size: 12.5px;
    line-height: 14px;
    letter-spacing: 0.24px;
    -webkit-text-stroke: 0.2px;
}

/* related information */
.related {
    width: 200px;
    height: 476px;
    padding-bottom: 1px;
    border-radius: 0 0 4px 4px;
    background: rgba(255, 255, 255, 0.035);
}
.related .tools {
    justify-content: space-between;
    padding: 0 9px 0 8px;
    margin-left: -1px;
    border-right-color: #3a4651;
}
.related .tools h2 {
    font-size: 13px;
    letter-spacing: 0.6px;
    -webkit-text-stroke: 0.5px;
}
.card {
    width: 189px;
    margin: 6px 0 0 5px;
    border-radius: 5px;
    background: rgba(255, 255, 255, 0.03);
    border: 1px solid rgba(0, 0, 0, 0.06);
    border-top-color: rgba(255, 255, 255, 0.06);
}
.club-card {
    height: 234px;
}
.comp-card {
    height: 171px;
}
.card h3 {
    padding-left: 4px;
    font-size: 11px;
    line-height: 12px;
    letter-spacing: 0.12px;
    -webkit-text-stroke: 0.4px;
}
.crest-big {
    margin: 9px 0 7px 54px;
}
dl {
    display: grid;
    grid-template-columns: 1fr auto;
    margin: 0 4px;
    line-height: 22px;
}
dt {
    padding-left: 1px;
    -webkit-text-stroke: 0.2px;
}
dt, dd {
    height: 22px;
}
dd {
    display: flex;
    align-items: center;
    justify-content: flex-end;
    padding-right: 2px;
    color: #b3cae6;
}
dd.white {
    color: #fff;
    padding-right: 3px;
}
dd.stars {
    padding: 2px 2px 0 0;
}
dd.nation {
    padding-right: 3px;
}
.nation svg {
    margin: 1px 4px 0 0;
}
.comp-card h3 {
    padding-top: 1px;
}
.banner {
    margin: 29px 0 27px -1px;
}
.banner-top {
    font-size: 13.5px;
    font-weight: bold;
    fill: #fff;
}
.banner-main {
    font-family: Inter, "Liberation Sans", sans-serif;
    font-size: 38px;
    font-weight: 300;
    fill: #eef4fa;
    stroke: #eef4fa;
    stroke-width: 0.6px;
}
.banner-logo {
    font-size: 7px;
    font-weight: bold;
    fill: #fff;
}
.banner-logo .tiny {
    font-size: 4px;
}
```
